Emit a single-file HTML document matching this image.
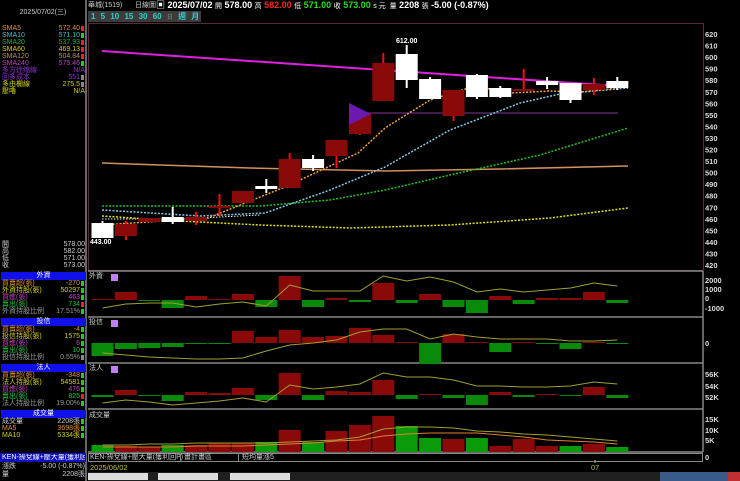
<!DOCTYPE html>
<html><head><meta charset="utf-8"><style>
*{margin:0;padding:0;box-sizing:border-box}
body{width:740px;height:481px;background:#000;overflow:hidden;position:relative;font-family:"Liberation Sans","Noto Sans CJK TC",sans-serif;color:#ddd}
.a{position:absolute;white-space:nowrap;font-size:7px;line-height:7px}
.r{text-align:right}
.hd{position:absolute;left:1px;width:85px;height:8px;background:#1010e8;color:#fff;font-size:7px;line-height:8px;text-align:center}
</style></head><body>
<svg id="s" width="740" height="481" style="position:absolute;left:0;top:0"></svg>
<div class="a" style="left:0;top:9px;width:86px;text-align:center;color:#ccc">2025/07/02(三)</div>
<div id="lp"></div>
<div class="a" style="left:88px;top:2px;color:#ccc">華城(1519)</div>
<div class="a" style="left:135px;top:2px;color:#ccc">日線圖</div>
<div class="a" style="left:156px;top:0;font-size:9px;line-height:10px;font-weight:bold;color:#fff">▣ 2025/07/02 <span style="font-weight:normal;font-size:7px">開</span> 578.00 <span style="font-weight:normal;font-size:7px">高</span> <span style="color:#f22">582.00</span> <span style="font-weight:normal;font-size:7px">低</span> <span style="color:#2d2">571.00</span> <span style="font-weight:normal;font-size:7px">收</span> <span style="color:#2d2">573.00</span> <span style="font-weight:normal;font-size:7px">s 元 &nbsp;量</span> 2208 <span style="font-weight:normal;font-size:7px">張</span> -5.00 (-0.87%)</div>
<div style="position:absolute;left:88px;top:11px;width:113px;height:11px;background:#3c3c3c"></div>
<div class="a" style="left:91px;top:13px;font-size:8px;line-height:8px;color:#3cc;word-spacing:3px;font-weight:bold">1 5 10 15 30 60 <span style="color:#888;font-weight:normal;font-size:6px">日</span> 週 月</div>
<script>
const s=document.getElementById('s');let h='';
const R=(x,y,w,hh,c)=>h+=`<rect x="${x}" y="${y}" width="${w}" height="${hh}" fill="${c}"/>`;
const L=(x1,y1,x2,y2,c,w=1)=>h+=`<line x1="${x1}" y1="${y1}" x2="${x2}" y2="${y2}" stroke="${c}" stroke-width="${w}"/>`;
const P=(pts,c,w=1,d='')=>h+=`<polyline points="${pts}" fill="none" stroke="${c}" stroke-width="${w}" ${d?`stroke-dasharray="${d}"`:''}/>`;
const T=(x,y,t,c='#ddd',sz=7,b='bold')=>h+=`<text x="${x}" y="${y}" fill="${c}" font-size="${sz}" font-weight="${b}" font-family="Liberation Sans">${t}</text>`;
L(86,0,86,481,'#666',2);
h+=`<rect x="88.5" y="23.5" width="615" height="247" fill="none" stroke="#5a2a3a"/>`;
[271,317,363,409,452].forEach(y=>L(88,y,703,y,'#888',1.5));
L(703,271,703,452,'#888',1.5);
for(let p=620;p>=420;p-=10){T(705,34+(620-p)*1.155+3,p,'#ddd',7.5)}
[[2000,283],[1000,292],[0,301],[-1000,311],[0,346],['56K',377],['54K',389],['52K',400],['15K',422],['10K',433],['5K',443],['0',460]].forEach(a=>T(705,a[1],a[0],'#ddd',7.5));
const X=i=>91.5+(i-1)*23.4;
P('102,51 618,86','#e020e0',2);
P('102,163 250,168 385,171 500,169 628,166','#d09060',1.5);
L(349,113,618,113,'#6a2a7a',1.2);
P('102,206 260,206 330,200 385,190 450,175 540,155 628,128','#20c020',1.5,'2,1.5');
P('102,216 180,221 260,225 350,228 450,225 550,218 628,208','#e0e020',1.5,'2,1.5');
P('102,210 200,216 265,213 330,190 385,167 450,130 520,103 560,94 628,88','#80c8e8',1.5,'2,1.5');
P('102,225 208,218 285,187 358,153 385,128 430,100 475,86 510,93 550,91 580,92 618,88','#f0a040',1.5,'2,1.5');
P('102,219 180,219 260,215','#f0f0f0',1,'1.5,1.5');
const C=[[1,'w',223,238,221,238],[2,'r',224,236,221,240],[3,'r',218,222,218,222],[4,'w',217,222,207,224],[5,'r',217,221,212,225],[6,'r',206,208,194,216],[7,'r',191,203,191,203],[8,'w',186,189,179,193],[9,'r',159,188,153,188],[10,'w',159,168,155,171],[11,'r',140,156,140,168],[12,'r',114,134,114,135],[13,'r',63,101,53,101],[14,'w',54,80,45,88],[15,'w',79,99,77,99],[16,'r',90,116,90,121],[17,'w',75,97,74,99],[18,'w',88,97,86,98],[19,'r',89,91,69,91],[20,'w',81,85,77,89],[21,'w',83,100,83,103],[22,'r',84,90,78,95],[23,'w',81,88,77,90]];
C.forEach(c=>{const x=X(c[0]),cx=x+11;const col=c[1]=='w'?'#fff':'#8a0a0a';L(cx,c[4],cx,c[5],c[1]=='w'?'#fff':'#f01010',2);R(x,c[2],22,Math.max(2,c[3]-c[2]),col);});
h+=`<polygon points="349,103 371,114 349,125" fill="#6a1ab0"/>`;
T(90,244,'443.00','#fff',7);T(396,43,'612.00','#fff',7);
const bars=(z,arr)=>arr.forEach((v,i)=>{const x=X(i+1);if(v>0)R(x,z-v,22,v,'#8a0a0a');else R(x,z,22,Math.max(1,-v),'#0a8a0a');});
bars(300,[1,8,-1,-8,4,1,6,-7,24,-7,2,-2,17,-3,6,-7,-13,4,-4,2,2,8,-3]);
bars(343,[-13,-6,-5,-4,-1,-1,12,6,13,6,7,15,8,1,-21,9,1,-9,1,-1,-6,1,-1]);
bars(395,[-2,5,-1,-6,3,2,7,-5,22,-5,4,3,15,-4,1,-3,-10,3,-2,1,-1,8,-3]);
const vt=[445,446,447,445,445,443,443,442,430,442,431,425,416,426,438,439,438,446,439,446,446,444,447];
vt.forEach((t,i)=>R(X(i+1),t,22,452-t,(i==0||i==3||i==7||i==9||i==13||i==14||i==16||i==20||i==22)?'#0a9a0a':'#8a0a0a'));
const pl=(ys,c)=>P(ys.map((y,i)=>`${X(i+1)+11},${y}`).join(' '),c,1);
pl([308,304,303,303,307,304,302,306,285,291,291,291,276,281,277,282,292,289,292,290,288,283,286],'#a0a030');
pl([353,355,357,358,359,359,358,351,345,343,340,332,329,329,339,334,337,339,339,339,341,341,340],'#a0a030');
pl([403,400,402,405,403,401,398,402,385,389,387,384,373,377,377,380,386,386,387,387,386,382,384],'#a0a030');
pl([445,445,444,444,443,443,443,443,442,441,440,437,429,427,427,428,431,432,434,435,437,439,441],'#a0a030');
pl([447,447,447,447,446,446,446,445,444,443,441,440,436,434,433,433,433,435,437,440,441,442,444],'#e08030');
[[276,'外資'],[322,'投信'],[368,'法人'],[415,'成交量']].forEach(a=>T(89,a[0]+2,a[1],'#ccc',7,'normal'));
[274,320,366].forEach(y=>R(111,y,7,7,'#c080f0'));
h+=`<rect x="88.5" y="453.5" width="614" height="8" fill="#000" stroke="#888"/>`;
R(0,453,86,9,'#1010c0');
R(88,472,652,9,'#202020');R(88,473,60,7,'#ddd');R(158,473,60,7,'#ddd');R(230,473,60,7,'#ddd');
R(660,472,80,9,'#3a5a8a');R(728,472,12,9,'#c03030');
T(90,470,'2025/06/02','#c0c030',7.5,'normal');T(591,470,'07','#c0c030',7.5,'normal');L(595,460,595,463,'#c0c030');
s.innerHTML=h;
let lp='';const row=(y,a,b,ca,cb,m)=>lp+=`<div class="a" style="left:2px;top:${y}px;color:${ca}">${a}</div><div class="a r" style="left:0;width:${m?80:85}px;top:${y}px;color:${cb}">${b}</div>`+(m?`<div style="position:absolute;left:81px;top:${y+1}px;width:3px;height:5px;background:${m}"></div>`:'');
const G='#2c2',Rr='#e22';
[['SMA5','572.40','#e09030',Rr],['SMA10','571.10','#40c0c0',G],['SMA20','537.93','#20b040',Rr],['SMA60','469.13','#d0d020',Rr],['SMA120','504.84','#c09060',Rr],['SMA240','575.46','#c040c0',G],['多方迷缩線','N/A','#9030d0',''],['回多成本','551','#9030d0','#888'],['多由欄線','275.5','#d0d020','#888'],['壓嚕','N/A','#d0d020','']].forEach((r,i)=>row(25+i*7,r[0],r[1],r[2],r[2],r[3]));
[['開','578.00'],['高','582.00'],['低','571.00'],['收','573.00']].forEach((r,i)=>row(241+i*7,r[0],r[1],'#ccc','#ccc',''));
lp+='<div class="hd" style="top:272px">外資</div><div class="hd" style="top:318px">投信</div><div class="hd" style="top:364px">法人</div><div class="hd" style="top:410px">成交量</div>';
const sec=(y0,rows)=>rows.forEach((r,i)=>row(y0+i*7,r[0],r[1],r[2],r[2],r[3]));
sec(280,[['買賣超(張)','-270','#e09030',G],['外資持股(張)','50297','#d0d020',G],['買進(張)','463','#c040c0',G],['賣出(張)','734','#20c040',Rr],['外資持股比例','17.51%','#999',G]]);
sec(326,[['買賣超(張)','-4','#e09030',G],['投信持股(張)','1575','#d0d020',G],['買進(張)','6','#c040c0',G],['賣出(張)','10','#20c040',G],['投信持股比例','0.55%','#999','#888']]);
sec(372,[['買賣超(張)','-348','#e09030',G],['法人持股(張)','54581','#d0d020',G],['買進(張)','476','#c040c0',G],['賣出(張)','825','#20c040',Rr],['法人持股比例','19.00%','#999',G]]);
sec(418,[['成交量','2208張','#ccc',G],['MA5','3698張','#e09030',G],['MA10','5334張','#d0d020',G]]);
lp+='<div class="a" style="left:2px;top:454px;width:83px;overflow:hidden;color:#fff">KEN-操兌線+壓大量(獲利回P)</div><div class="a" style="left:90px;top:454px;color:#ccc">KEN-操兌線+壓大量(獲利回P)</div><div class="a" style="left:180px;top:454px;color:#ccc;border-left:1px solid #888;padding-left:3px">畫計畫區</div><div class="a" style="left:238px;top:454px;color:#ccc;border-left:1px solid #888;padding-left:3px">短均量漲5</div>';
row(463,'漲跌','-5.00 (-0.87%)','#ccc','#ccc','');row(471,'量','2208張','#ccc','#ccc','');
document.getElementById('lp').innerHTML=lp;
</script>
</body></html>
